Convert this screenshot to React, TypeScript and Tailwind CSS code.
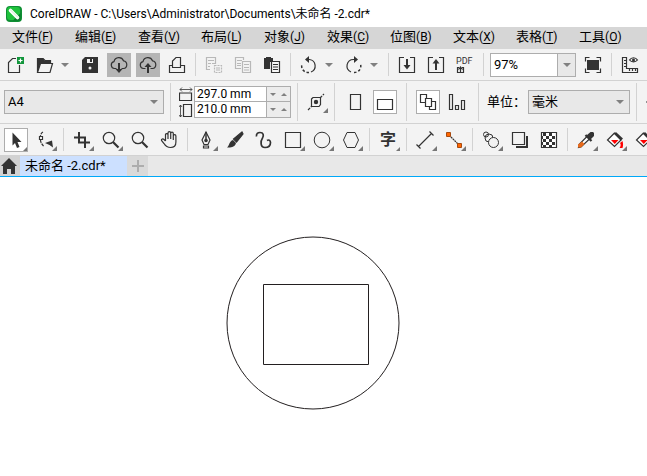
import type { ReactNode } from "react";

const INK = "#333333";
const MUTED = "#b8b8b8";

type ToolProps = {
  label: string;
  children: ReactNode;
  look?: "plain" | "pressed" | "boxed";
  flyout?: boolean;
  stroke?: string;
};

const looks = {
  plain: "",
  pressed: "bg-[#b5b5b5]",
  boxed: "bg-white outline outline-1 -outline-offset-1 outline-[#adadad]",
};

function Tool({ label, children, look = "plain", flyout, stroke = INK }: ToolProps) {
  return (
    <button type="button" aria-label={label} className={`size-6 shrink-0 ${looks[look]}`}>
      <svg viewBox="0 0 24 24" className="block size-6" fill="none" stroke={stroke} strokeWidth="1.2">
        {children}
        {flyout && <path d="M24 18v5h-5z" fill="#777" stroke="none" />}
      </svg>
    </button>
  );
}

function Sep() {
  return (
    <div className="flex w-[3px] shrink-0 justify-center self-stretch">
      <div className="w-px bg-[#d2d2d2]" />
    </div>
  );
}

function Arrow() {
  return (
    <svg viewBox="0 0 8 4" className="h-1 w-2" fill="#808080">
      <path d="M0 0h8L4 4z" />
    </svg>
  );
}

function More({ label }: { label: string }) {
  return (
    <button type="button" aria-label={label} className="-ml-px flex h-6 w-3 shrink-0 items-center">
      <Arrow />
    </button>
  );
}

type PickerProps = { label: string; value: string; options: string[]; size: string; split?: boolean };

function Picker({ label, value, options, size, split }: PickerProps) {
  return (
    <div className={`relative h-6 shrink-0 border border-[#adadad] ${split ? "bg-white" : "bg-[#e8e8e8]"} ${size}`}>
      <select
        aria-label={label}
        defaultValue={value}
        className="block h-full w-full appearance-none bg-transparent px-[3px] text-[13px] leading-[22px] outline-none"
      >
        {options.map((o) => (
          <option key={o}>{o}</option>
        ))}
      </select>
      <div
        className={`pointer-events-none absolute inset-y-0 right-0 flex w-[18px] items-center justify-center ${
          split ? "border-l border-[#adadad] bg-[#e8e8e8]" : ""
        }`}
      >
        <Arrow />
      </div>
    </div>
  );
}

function Dimension({ label, value }: { label: string; value: string }) {
  return (
    <div className="flex h-[15px] bg-white">
      <input
        aria-label={label}
        defaultValue={value}
        className="h-[15px] w-full min-w-0 flex-1 pl-0.5 text-[12px] leading-[15px] outline-none"
      />
      <div className="flex w-6 items-center justify-around border-l border-[#adadad] bg-[#ececec]">
        <button type="button" aria-label={`${label} -`}>
          <svg viewBox="0 0 6 3" className="block h-[3px] w-1.5" fill="#808080">
            <path d="M0 0h6L3 3z" />
          </svg>
        </button>
        <button type="button" aria-label={`${label} +`}>
          <svg viewBox="0 0 6 3" className="block h-[3px] w-1.5" fill="#808080">
            <path d="M0 3h6L3 0z" />
          </svg>
        </button>
      </div>
    </div>
  );
}

const menus = [
  ["文件", "F"],
  ["编辑", "E"],
  ["查看", "V"],
  ["布局", "L"],
  ["对象", "J"],
  ["效果", "C"],
  ["位图", "B"],
  ["文本", "X"],
  ["表格", "T"],
  ["工具", "O"],
];

const CLOUD = "M9.500 15.500H7.500A3.500 3.500 0 0 1 7 8.600A5 5 0 0 1 16.500 7.800A3.900 3.900 0 0 1 16.500 15.500H14.500";

function Bucket() {
  return (
    <>
      <path d="M11.500 5L4.500 12L11.500 18.500L18 12Z" fill="#fff" />
      <path d="M8 12h7.500l-3.750 4z" fill="#f00" stroke="none" />
      <path d="M12 5L19 11.500" strokeWidth="2.800" />
      <path d="M19.500 13c1 3 .5 5.500 0 7H16.500c1.500-2 1.500-4 .5-5z" fill="#f00" stroke="none" />
    </>
  );
}

function StandardBar() {
  return (
    <div className="flex h-8 items-center gap-[5px] overflow-hidden border-b border-[#d2d2d2] py-1 pl-1">
      <Tool label="新建">
        <path d="M12 5.500H8.500L4.500 9.500V19.500H15.500V12" />
        <path d="M13 4h7v7h-7z" fill="#12963c" stroke="none" />
        <path d="M16.500 5.500v4M14.500 7.500h4" stroke="#fff" />
      </Tool>
      <Tool label="打开">
        <path d="M4.500 19V5.500H10L12 7.500H17.500V10" />
        <path d="M4 5h6l2 3h6v3H8L5 19H4z" fill={INK} stroke="none" />
        <path d="M7.500 10.500H19.500L17 19.500H4.500Z" fill="#f3f3f3" />
      </Tool>
      <More label="最近打开的文件" />
      <Tool label="保存">
        <path d="M7 4h13v16H4V7z" fill={INK} stroke="none" />
        <path d="M9 6h6v4H9z" fill="#f3f3f3" stroke="none" />
        <path d="M13 6v3" stroke={INK} strokeWidth="2" />
        <circle cx="12" cy="15" r="1.500" fill="#f3f3f3" stroke="none" />
      </Tool>
      <Tool label="从云中打开" look="pressed">
        <path d={CLOUD} />
        <path d="M12 10v8" strokeWidth="2" />
        <path d="M8.500 16h7L12 20z" fill={INK} stroke="none" />
      </Tool>
      <Tool label="保存到云" look="pressed">
        <path d={CLOUD} />
        <path d="M12 13v7" strokeWidth="2" />
        <path d="M8.500 14h7L12 10z" fill={INK} stroke="none" />
      </Tool>
      <Tool label="打印">
        <path d="M7.500 14.500V8L11 4.500H15.500V14.500" />
        <path d="M7.500 12.500H4.500V19.500H19.500V12.500H15.500M7 14.500h9" />
      </Tool>
      <Sep />
      <Tool label="剪切" stroke={MUTED}>
        <path d="M8 16.500H4.500V4.500H13.500V10.500H10M6 7.500h6M6 10.500h3M6 13.500h2" />
        <path d="M12.500 12.500h7v7h-7z" strokeDasharray="2 1" />
        <path d="M14 15h4M14 17h4" />
      </Tool>
      <Tool label="复制" stroke={MUTED}>
        <path d="M10 15.500H4.500V4.500H12.500V7M6 7.500h5M6 10.500h4M6 12.500h4" />
        <path d="M11.500 8.500h8v11h-8zM13 11.500h5M13 14.500h5M13 17h5" />
      </Tool>
      <Tool label="粘贴">
        <path d="M4 5h2V4h5v1h2v4h-3v7H4z" fill={INK} stroke="none" />
        <path d="M11.500 8.500h8v11h-8zM13 11.500h5M13 14h5M13 16.500h5" fill="#f8f8f8" />
      </Tool>
      <Sep />
      <Tool label="撤消">
        <path d="M10 6.500h2.500A6.500 6.500 0 0 1 14 19" />
        <path d="M12 19.500A6.500 6.500 0 0 1 5 11" strokeDasharray="2.500 2" strokeWidth="1.500" />
        <path d="M8 6.500L12 3v7z" fill={INK} stroke="none" />
      </Tool>
      <More label="撤消列表" />
      <Tool label="重做">
        <path d="M14 6.500h-2.500A6.500 6.500 0 0 0 9 19" />
        <path d="M12 19.500A6.500 6.500 0 0 0 18.500 11" strokeDasharray="2.500 2" strokeWidth="1.500" />
        <path d="M16 6.500L12 3v7z" fill={INK} stroke="none" />
      </Tool>
      <More label="重做列表" />
      <Sep />
      <Tool label="导入">
        <path d="M9 4.500H4.500V19.500H19.500V4.500H15" />
        <path d="M12 6v8" strokeWidth="2" />
        <path d="M8.500 12h7L12 16.500z" fill={INK} stroke="none" />
      </Tool>
      <Tool label="导出">
        <path d="M9 4.500H4.500V19.500H19.500V4.500H15" />
        <path d="M12 9v8" strokeWidth="2" />
        <path d="M8.500 10.500h7L12 6z" fill={INK} stroke="none" />
      </Tool>
      <Tool label="发布为 PDF">
        <text x="3" y="11" fontSize="9" fill={INK} stroke="none" fontFamily="Roboto, sans-serif">
          PDF
        </text>
        <path d="M6 14.500H4.500V19.500H10.500V14.500H9M7.500 19v-5M5.500 16.500L7.500 14L9.500 16.500" />
      </Tool>
      <Sep />
      <Picker label="缩放级别" value="97%" options={["97%", "100%", "200%"]} size="w-[86px]" split />
      <Tool label="全屏预览">
        <path d="M6 7h12v10H6z" fill={INK} stroke="none" />
        <path d="M8.500 4.500h-4v4M15.500 4.500h4v4M8.500 19.500h-4v-4M15.500 19.500h4v-4" />
      </Tool>
      <Sep />
      <Tool label="显示标尺">
        <path d="M4.500 4.500H8.500V15.500H19.500V19.500H4.500Z" />
        <path d="M6 7.500h2M6 10.500h2M6 13.500h2M11.500 16v2M14.500 16v2M17.500 16v2" />
        <path d="M11.500 7C13.500 4 17.500 4 19.500 7C17.500 9.500 13.500 9.500 11.500 7Z" />
        <circle cx="15.500" cy="7" r="1.500" fill={INK} stroke="none" />
      </Tool>
    </div>
  );
}

function PropertyBar() {
  return (
    <div className="flex h-[43px] items-center gap-[5px] overflow-hidden border-b border-[#d2d2d2] py-0.5 pl-1">
      <Picker label="页面大小" value="A4" options={["A4", "A3", "Letter"]} size="w-[160px]" />
      <Sep />
      <div className="flex w-[114px] shrink-0 items-center justify-between pl-0.5">
        <svg viewBox="0 0 14 33" className="h-[33px] w-3.5 shrink-0" fill="none" stroke={INK} strokeWidth="1.2">
          <path d="M1 3.500h12M3 1.500l-2 2l2 2M11 1.500l2 2l-2 2" strokeWidth="0.800" />
          <path d="M0.500 7h12v7.500h-12z" />
          <path d="M1.500 19v12M0 21l1.500-2l1.500 2M0 29l1.500 2l1.500-2" strokeWidth="0.800" />
          <path d="M4.500 18.500h8v12h-8z" />
        </svg>
        <div className="w-[97px] shrink-0 divide-y divide-[#adadad] border border-[#adadad]">
          <Dimension label="页面宽度" value="297.0 mm" />
          <Dimension label="页面高度" value="210.0 mm" />
        </div>
      </div>
      <Sep />
      <Tool label="自动适合页面" flyout>
        <path d="M7.500 9L9 7.500H16.500V14.500L15 16.500H7.500Z" />
        <circle cx="12" cy="12" r="2.200" fill={INK} stroke="none" />
        <path d="M4 20L8 16M16 8L20 4" strokeDasharray="3 1" />
      </Tool>
      <Sep />
      <div className="flex gap-[5px] px-[3px]">
        <Tool label="纵向">
          <path d="M6.500 4.500h10v15h-10z" />
        </Tool>
        <Tool label="横向" look="boxed">
          <path d="M4.500 9.500h15v10h-15z" />
        </Tool>
      </div>
      <Sep />
      <div className="flex gap-[5px] px-[3px]">
        <Tool label="所有页面" look="boxed">
          <path d="M4.500 4.500h6v8h-6z" />
          <path d="M9.500 8.500h6v8h-6z" fill="#fff" />
          <path d="M15.500 11.500h4v8h-6v-3" />
        </Tool>
        <Tool label="当前页">
          <path d="M4.500 4.500h3v15h-3zM10.500 15.500h3v4h-3zM16.500 10.500h3v9h-3z" />
        </Tool>
      </div>
      <Sep />
      <span className="w-[38px] shrink-0 pl-0.5 text-[13px] whitespace-nowrap">单位：</span>
      <Picker label="单位" value="毫米" options={["毫米", "厘米", "英寸"]} size="w-[102px]" />
      <Sep />
      <Tool label="微调距离">
        <path d="M3 12h5M5 10v4" />
      </Tool>
    </div>
  );
}

function Toolbox() {
  return (
    <div className="flex h-8 items-center gap-[5px] overflow-hidden border-b border-[#d2d2d2] py-1 pl-1">
      <Tool label="选择" look="boxed" flyout>
        <path d="M8.500 4.500L17.500 14H13.500L15.500 19L13 20L11 15L8.500 17.500Z" fill={INK} stroke="none" />
      </Tool>
      <Tool label="形状" flyout>
        <path d="M10 4C8 5 7.500 7 7.500 8M7.500 12C7.500 14 8.500 16 11 18.500" strokeDasharray="3 1" />
        <path d="M6.500 8.500h3v3h-3z" fill="#fff" />
        <path d="M12 15L19 12.500L20 19.500L16.500 17Z" fill={INK} stroke="none" />
      </Tool>
      <Sep />
      <Tool label="裁剪" flyout>
        <path d="M9 4V14.500H20M4 9.500H15V20" strokeWidth="2" />
      </Tool>
      <Tool label="缩放" flyout>
        <circle cx="10" cy="10" r="5.700" />
        <path d="M14 14L19.500 19.500" strokeWidth="2.200" />
      </Tool>
      <Tool label="缩放到页面">
        <circle cx="10" cy="10" r="5.700" />
        <path d="M14 14L19.500 19.500" strokeWidth="2.200" />
      </Tool>
      <Tool label="平移">
        <path d="M8.500 13V6.500a1.300 1.300 0 0 1 2.500 0V11V5a1.300 1.300 0 0 1 2.700 0V11V5.500a1.300 1.300 0 0 1 2.600 0V12V8a1.300 1.300 0 0 1 2.600 0V14C19 18 17 19.500 13.500 19.500C10 19.500 8.500 18 7 15.500L4.500 12.500C4 11 6 10.500 7 11.500L8.500 13" />
      </Tool>
      <Sep />
      <Tool label="钢笔" flyout>
        <path d="M12 4L8 12L10 16.500H14L16 12Z" />
        <path d="M12 4v8" strokeWidth="1.500" />
        <circle cx="12" cy="12.500" r="1.200" fill={INK} />
        <path d="M9.500 18h5v2h-5z" />
      </Tool>
      <Tool label="艺术笔">
        <path d="M19 4L20 6L13.500 14L10.500 11Z" fill={INK} />
        <path d="M10 12L13 15C12 19 8 20 4 19.500C6.500 18 6 13 10 12Z" fill={INK} stroke="none" />
      </Tool>
      <Tool label="LiveSketch">
        <path
          d="M4.500 8.500C4 5.500 6 4.500 8 4.500C11.500 4.500 12 7.500 10.500 10C8.500 13 8 19.500 13 19.500C17 19.500 18.500 17 18.500 14.500C18.500 12 16.500 11.500 15 12.500"
          strokeWidth="1.700"
        />
      </Tool>
      <Tool label="矩形" flyout>
        <path d="M4.500 4.500h15v15h-15z" />
      </Tool>
      <Tool label="椭圆形" flyout>
        <circle cx="12" cy="12" r="7.800" strokeWidth="1" />
      </Tool>
      <Tool label="多边形" flyout>
        <path d="M8 4.500H16L19.500 12L16 19.500H8L4.500 12Z" strokeWidth="1" />
      </Tool>
      <Sep />
      <button type="button" aria-label="文本" className="flex size-6 shrink-0 items-end text-[16px] leading-6 font-bold text-[#333333]">
        <span className="pl-1">字</span>
        <svg viewBox="0 0 4 4" className="mb-px size-1 shrink-0" fill="#777">
          <path d="M4 0v4H0z" />
        </svg>
      </button>
      <Sep />
      <Tool label="平行度量" flyout>
        <path d="M5.500 18.500L18.500 5.500M3.500 16.500l4 4M16.500 3.500l4 4" />
      </Tool>
      <Tool label="连接器" flyout>
        <path d="M7 7L17 17" strokeDasharray="2 .6" />
        <path d="M4.500 4.500h4v4h-4zM15.500 15.500h4v4h-4z" fill="#ff6600" stroke="#a84a10" strokeWidth="1" />
      </Tool>
      <Sep />
      <Tool label="混合" flyout>
        <circle cx="7" cy="6.500" r="2.500" strokeWidth="1" />
        <circle cx="10" cy="10" r="4" strokeWidth="1" />
        <circle cx="14.500" cy="14.500" r="5" fill="#f3f3f3" strokeWidth="1" />
      </Tool>
      <Tool label="阴影">
        <path d="M8 8h12v12H8z" fill={INK} stroke="none" />
        <path d="M4.500 4.500h12v12h-12z" fill="#f3f3f3" stroke="#f3f3f3" strokeWidth="3" />
        <path d="M4.500 4.500h12v12h-12z" />
      </Tool>
      <Tool label="透明度">
        <path d="M4.500 4.500h15v15h-15z" fill="#fff" />
        <path
          d="M6 6.500h12M6 12.500h12M6 18.500h12M9 9.500h12M9 15.500h12"
          strokeDasharray="3 3"
          strokeWidth="3"
        />
        <path d="M5 9.500h1M5 15.500h1" strokeWidth="3" />
      </Tool>
      <Sep />
      <Tool label="颜色滴管" flyout>
        <path d="M13.500 8L5 16.500L4.500 19.500L7 19L16 10.500Z" fill="#fff" />
        <path d="M8 13.500L10.500 16L7 19.500H4V16.500z" fill="#e86a1c" stroke="none" />
        <path d="M11.500 7l6 6" strokeWidth="2.200" />
        <path d="M16.500 4h2.500l1 1v3l-3.500 3.500l-4-4z" fill={INK} stroke="none" />
      </Tool>
      <Tool label="交互式填充" flyout>
        <Bucket />
      </Tool>
      <Tool label="智能填充" flyout>
        <Bucket />
      </Tool>
    </div>
  );
}

export default function App() {
  return (
    <div className="flex min-h-screen flex-col overflow-hidden bg-white font-['Roboto','Noto_Sans_CJK_SC',sans-serif] text-[13px] text-black">
      <header className="flex h-[27px] items-center gap-2 bg-white pl-1.5">
        <svg viewBox="0 0 16 16" className="size-4 shrink-0">
          <rect width="16" height="16" rx="4" fill="#0f8f34" />
          <rect x="1" y="1" width="13" height="13" rx="3" fill="#1fc23c" />
          <path d="M7 14.500H14.500V7z" fill="#087a2c" />
          <path d="M4.500 4.500L11.500 11.500" stroke="#fff" strokeWidth="3.600" strokeLinecap="round" />
          <path d="M4 3.500L12 11.500" stroke="#c9edc9" />
        </svg>
        <h1 className="text-[12px] whitespace-nowrap">
          CorelDRAW - C:\Users\Administrator\Documents\未命名 -2.cdr*
        </h1>
      </header>
      <nav className="flex h-[22px] items-start overflow-hidden bg-[#d6d6d6] pl-3">
        {menus.map(([name, key]) => (
          <button key={key} type="button" className="w-[63px] shrink-0 text-left leading-5">
            {name}
            <span className="text-[12px]">
              (<span className="underline underline-offset-2">{key}</span>)
            </span>
          </button>
        ))}
      </nav>
      <div className="bg-[#f3f3f3]">
        <StandardBar />
        <PropertyBar />
        <Toolbox />
      </div>
      <div className="flex h-[21px] border-b border-[#00a8f8] bg-[#e8e8e8]">
        <button type="button" aria-label="欢迎屏幕" className="flex w-5 items-center bg-[#d2d2d2] pl-px">
          <svg viewBox="0 0 16 16" className="size-4" fill={INK}>
            <path d="M8 0L16 8H14V16H10V11H6V16H2V8H0Z" />
          </svg>
        </button>
        <button type="button" className="w-[107px] bg-[#cce0ff] pl-[5px] text-left leading-5 whitespace-nowrap">
          未命名 -2.cdr*
        </button>
        <button type="button" aria-label="新建文档" className="flex w-[21px] items-center justify-center bg-[#dadada]">
          <svg viewBox="0 0 12 12" className="size-3" stroke="#adadad" strokeWidth="2">
            <path d="M6 0v12M0 6h12" />
          </svg>
        </button>
      </div>
      <main className="relative min-h-[240px] flex-1">
        <svg
          viewBox="0 0 174 174"
          className="absolute top-[59px] left-[226px] size-[174px]"
          fill="none"
          stroke="#231f20"
        >
          <circle cx="87" cy="87" r="86" />
          <path d="M37.500 48.500h105v80h-105z" />
        </svg>
      </main>
    </div>
  );
}
